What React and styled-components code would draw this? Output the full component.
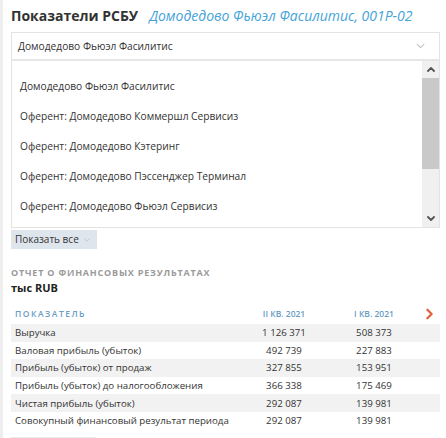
import React from 'react';
import styled, { createGlobalStyle } from 'styled-components';

const Global = createGlobalStyle`
  html, body { margin: 0; padding: 0; background: #fff; overflow: hidden; }
  body { font-family: "Open Sans", "Noto Sans", sans-serif; color: #333; }
  * { box-sizing: border-box; }
`;

const Page = styled.div`
  border-left: 3px solid #eeeeee;
  height: 438px;
  padding: 6px 6px 0 8px;
  overflow: hidden;
`;

const Header = styled.div`
  display: flex;
  align-items: baseline;
  gap: 11px;
  height: 20px;
  line-height: 20px;
  margin-bottom: 6px;
`;

const Title = styled.h1`
  margin: 0;
  font-size: 14px;
  font-weight: 700;
  color: #333;
`;

const Subtitle = styled.span`
  font-size: 14px;
  font-style: italic;
  color: #45a3d8;
`;

const Select = styled.div`
  height: 29px;
  border: 1px solid #e3e3e3;
  border-bottom: 2px solid #e6e6e6;
  display: flex;
  align-items: center;
  justify-content: space-between;
  padding: 0 14px 0 6px;
  font-size: 10.2px;
  color: #333;
`;

const List = styled.div`
  display: flex;
  height: 167px;
  border: 1px solid #e3e3e3;
  border-top: none;
`;

const Items = styled.div`
  flex: 1;
  padding-top: 10px;
  overflow: hidden;
`;

const Item = styled.div`
  height: 30px;
  line-height: 30px;
  padding-left: 8px;
  font-size: 10.2px;
  color: #333;
  white-space: nowrap;
`;

const Scrollbar = styled.div`
  width: 17px;
  display: flex;
  flex-direction: column;
  background: #f0f0f0;
`;

const ScrollButton = styled.div`
  height: 17px;
  display: flex;
  align-items: center;
  justify-content: center;
`;

const Thumb = styled.div`
  height: 91px;
  background: #c9c9c9;
`;

const Track = styled.div`
  flex: 1;
`;

const ShowAll = styled.div`
  margin-top: 2px;
  height: 19px;
  width: 86px;
  background: #dfe5ec;
  font-size: 10px;
  line-height: 19px;
  color: #333;
  display: flex;
  align-items: center;
  gap: 5px;
  padding: 0 4px;
  white-space: nowrap;
`;

const SectionTitle = styled.div`
  margin-top: 17px;
  font-size: 9px;
  font-weight: 700;
  letter-spacing: 0.8px;
  line-height: 14px;
  color: #9a9a9a;
  text-transform: uppercase;
  white-space: nowrap;
`;

const Units = styled.div`
  font-size: 11px;
  font-weight: 700;
  line-height: 15px;
  color: #222;
`;

const Table = styled.div`
  margin-top: 8px;
  display: grid;
  grid-template-columns: 1fr 90px 90px 21px;
`;

const Row = styled.div`
  display: contents;
  & > * {
    background: ${p => (p.$shaded ? '#f2f2f2' : 'transparent')};
    height: ${p => (p.$head ? '21px' : '17.6px')};
  }
`;

const Cell = styled.div`
  display: flex;
  align-items: center;
  justify-content: ${p => (p.$num ? 'center' : 'flex-start')};
  padding-left: ${p => (p.$num ? '0' : '4px')};
  font-size: ${p => (p.$head ? '8.5px' : '9.7px')};
  font-weight: ${p => (p.$head ? 600 : 400)};
  letter-spacing: ${p => (p.$spaced ? '1.5px' : '0')};
  color: ${p => (p.$head ? '#6b9cc6' : '#333')};
  text-transform: ${p => (p.$head ? 'uppercase' : 'none')};
  white-space: nowrap;
`;

const MoreButton = styled.div`
  margin-top: 7px;
  height: 19px;
  width: 85px;
  background: #e8ebee;
`;

const Chevron = ({ dir = 'down', color = '#bbb', w = 8, h = 5, sw = 1 }) => {
  const d =
    dir === 'down'
      ? 'M1 1 L4 4 L7 1'
      : dir === 'up'
      ? 'M1 4 L4 1 L7 4'
      : 'M1 1 L4 4 L1 7';
  const vb = dir === 'right' ? '0 0 5 8' : '0 0 8 5';
  return (
    <svg width={w} height={h} viewBox={vb} fill="none">
      <path d={d} stroke={color} strokeWidth={sw} strokeLinecap="round" strokeLinejoin="round" />
    </svg>
  );
};

const options = [
  'Домодедово Фьюэл Фасилитис',
  'Оферент: Домодедово Коммершл Сервисиз',
  'Оферент: Домодедово Кэтеринг',
  'Оферент: Домодедово Пэссенджер Терминал',
  'Оферент: Домодедово Фьюэл Сервисиз',
];

const rows = [
  ['Выручка', '1 126 371', '508 373'],
  ['Валовая прибыль (убыток)', '492 739', '227 883'],
  ['Прибыль (убыток) от продаж', '327 855', '153 951'],
  ['Прибыль (убыток) до налогообложения', '366 338', '175 469'],
  ['Чистая прибыль (убыток)', '292 087', '139 981'],
  ['Совокупный финансовый результат периода', '292 087', '139 981'],
];

export default function App() {
  return (
    <>
      <Global />
      <Page>
        <Header>
          <Title>Показатели РСБУ</Title>
          <Subtitle>Домодедово Фьюэл Фасилитис, 001P-02</Subtitle>
        </Header>
        <Select>
          <span>Домодедово Фьюэл Фасилитис</span>
          <Chevron dir="down" color="#c4c4c4" w={9} h={6} />
        </Select>
        <List>
          <Items>
            {options.map(o => (
              <Item key={o}>{o}</Item>
            ))}
          </Items>
          <Scrollbar>
            <ScrollButton>
              <Chevron dir="up" color="#555" w={8} h={5} sw={1.8} />
            </ScrollButton>
            <Thumb />
            <Track />
            <ScrollButton>
              <Chevron dir="down" color="#555" w={8} h={5} sw={1.8} />
            </ScrollButton>
          </Scrollbar>
        </List>
        <ShowAll>
          <span>Показать все</span>
          <Chevron dir="down" color="#b8bfc8" w={6} h={4} />
        </ShowAll>
        <SectionTitle>Отчет о финансовых результатах</SectionTitle>
        <Units>тыс RUB</Units>
        <Table>
          <Row $head>
            <Cell $head $spaced>Показатель</Cell>
            <Cell $head $num>II кв. 2021</Cell>
            <Cell $head $num>I кв. 2021</Cell>
            <Cell $num>
              <Chevron dir="right" color="#e0613a" w={7} h={12} sw={1.6} />
            </Cell>
          </Row>
          {rows.map((r, i) => (
            <Row key={r[0]} $shaded={i % 2 === 0}>
              <Cell>{r[0]}</Cell>
              <Cell $num>{r[1]}</Cell>
              <Cell $num>{r[2]}</Cell>
              <Cell />
            </Row>
          ))}
        </Table>
        <MoreButton />
      </Page>
    </>
  );
}
